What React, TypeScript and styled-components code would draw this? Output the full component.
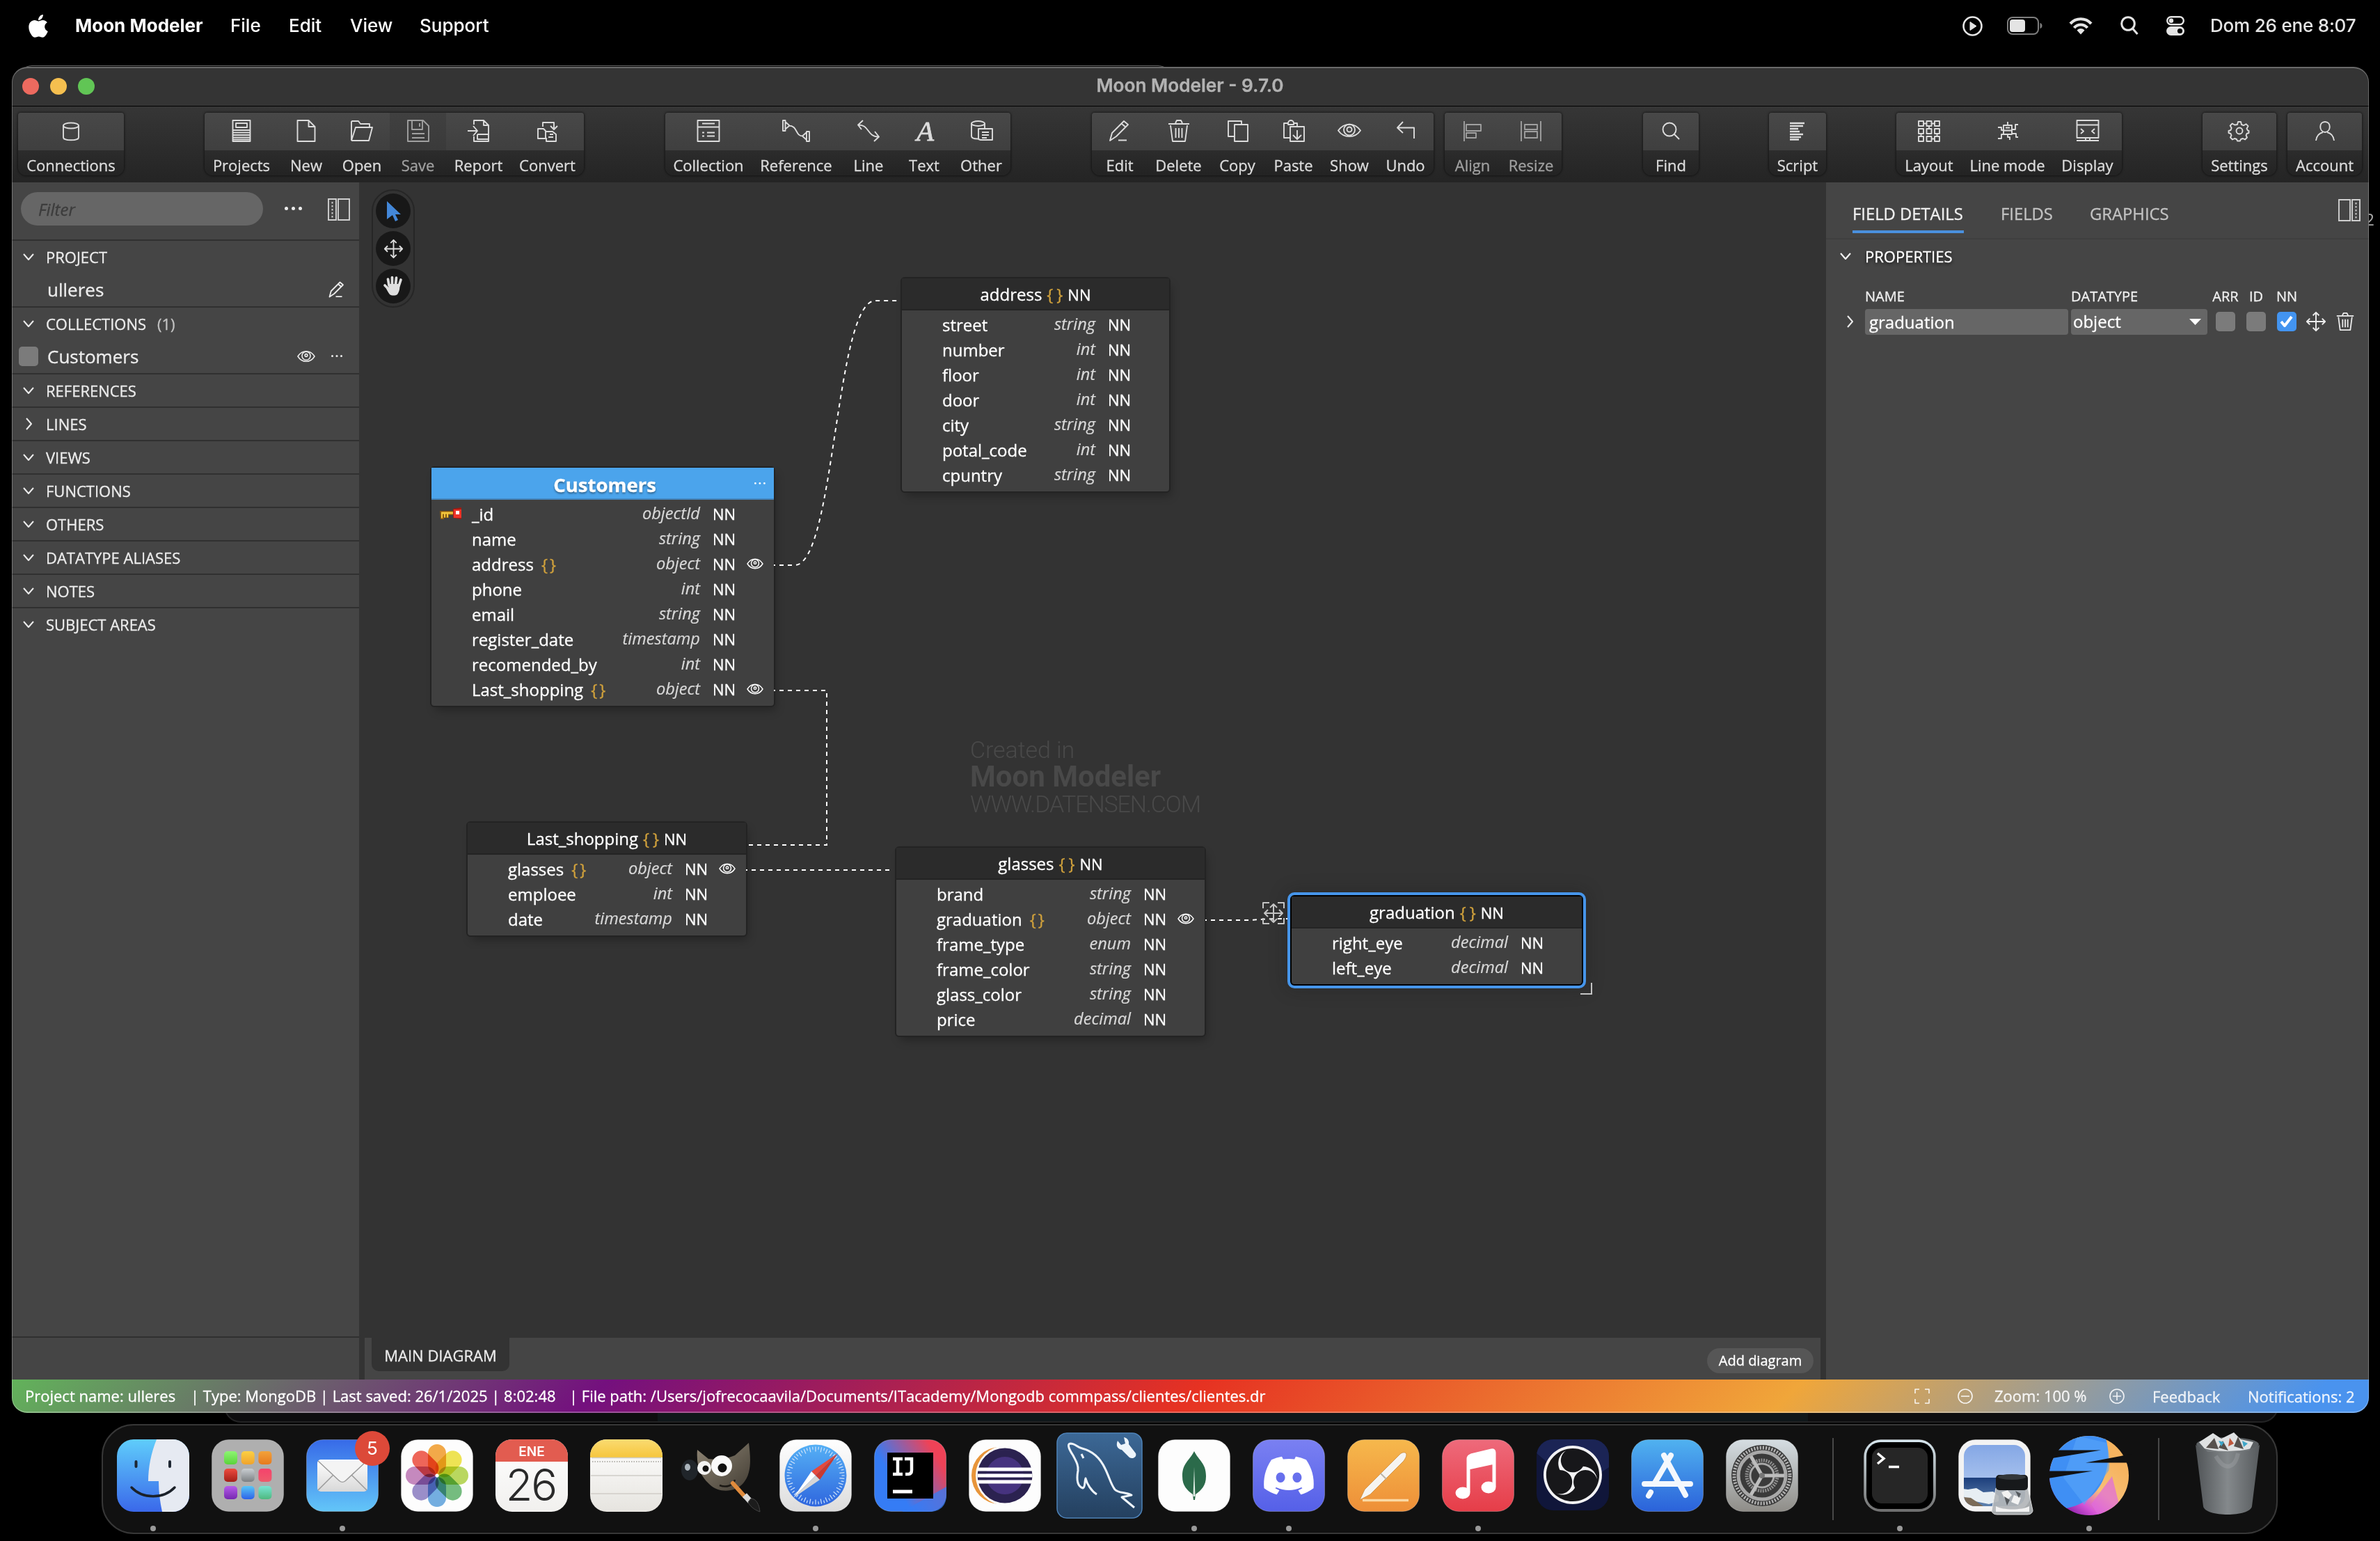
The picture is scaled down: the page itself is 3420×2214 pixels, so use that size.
import React from "react";
import styled, { createGlobalStyle, css } from "styled-components";
import { FaApple, FaDiscord } from "react-icons/fa";
import { SiObsstudio } from "react-icons/si";

const ui = `"Open Sans", "Noto Sans", sans-serif`;
const sys = `Inter, "Liberation Sans", sans-serif`;

const Global = createGlobalStyle`
  * { box-sizing: border-box; }
  body { margin: 0; background: #000; font-family: ${ui}; color: #ececec; }
  svg { display: block; flex: none; overflow: visible; }
`;

/* ---------- desktop ---------- */
const Desktop = styled.div`
  position: relative;
  width: 3420px;
  height: 2214px;
  background: #000;
  overflow: hidden;
`;

const MenuBar = styled.header`
  height: 74px;
  display: flex;
  align-items: center;
  padding: 0 35px 0 41px;
  font: 500 26px/74px ${sys};
  color: #fff;
`;
const AppleMark = styled(FaApple)`
  width: 28px;
  height: 34px;
  margin-right: 39px;
`;
const MenuItem = styled.span<{ $w: number; $bold?: boolean }>`
  width: ${(p) => p.$w}px;
  font-weight: ${(p) => (p.$bold ? 700 : 500)};
  white-space: nowrap;
`;
const MenuRight = styled.div`
  margin-left: auto;
  display: flex;
  align-items: center;
  color: #e4e4e4;
`;
const Clock = styled.span`
  margin-left: 37px;
  width: 209px;
  letter-spacing: -0.2px;
  white-space: nowrap;
`;
const Gap = styled.i<{ $w: number }>`
  width: ${(p) => p.$w}px;
`;

/* ---------- windows ---------- */
const BackTop = styled.div`
  position: absolute;
  left: 24px;
  top: 94px;
  width: 1662px;
  height: 40px;
  border-top: 1px solid #6a6a6a;
  border-radius: 22px 22px 0 0;
`;
const BackBottom = styled.div`
  position: absolute;
  left: 322px;
  top: 1990px;
  width: 2952px;
  height: 54px;
  background: linear-gradient(90deg, #0d0d0f 0 621px, #10171a 621px 2274px, #0e0e10 2274px);
  border: 2px solid #232324;
  border-radius: 0 0 24px 24px;
`;
const BackDigit = styled.div`
  position: absolute;
  left: 3404px;
  top: 301px;
  width: 8px;
  height: 28px;
  overflow: hidden;
  font: 24px/28px ${ui};
  color: #a8a8a8;
  direction: rtl;
`;
const Win = styled.main`
  position: absolute;
  left: 17px;
  top: 96px;
  width: 3387px;
  height: 1934px;
  display: flex;
  flex-direction: column;
  border-radius: 22px;
  overflow: hidden;
  background: #333;
  -webkit-text-stroke: 0.3px;
  &::after {
    content: "";
    position: absolute;
    inset: 0;
    border-radius: 22px;
    border: 2px solid rgba(255, 255, 255, 0.27);
    border-left-width: 1px;
    border-right-width: 1px;
    pointer-events: none;
  }
`;
const TitleBar = styled.div`
  height: 57px;
  flex: none;
  display: flex;
  align-items: center;
  padding-left: 15px;
  border-bottom: 1px solid #000;
  background: #343434;
`;
const Light = styled.i<{ $c: string }>`
  width: 24px;
  height: 24px;
  border-radius: 50%;
  margin-right: 16px;
  background: ${(p) => p.$c};
`;
const Title = styled.h1`
  margin: 0 136px 2px 0;
  flex: 1;
  text-align: center;
  font: 600 26.2px/54px ${sys};
  color: #b2b2b2;
`;

/* ---------- toolbar ---------- */
const Toolbar = styled.nav`
  height: 109px;
  flex: none;
  display: flex;
  padding: 9px 0 0 9px;
  background: linear-gradient(#363636, #242424);
  color: #dcdcdc;
`;
const Group = styled.div<{ $w: number; $ml?: number }>`
  width: ${(p) => p.$w}px;
  margin-left: ${(p) => p.$ml || 0}px;
  height: 90px;
  flex: none;
  display: flex;
  border-radius: 4px 4px 12px 12px;
  background: linear-gradient(#484848, #3f3f3f 54px, #2c2c2c 54px, #232323);
  box-shadow: 0 0 3px 1px rgba(0, 0, 0, 0.5);
`;
const Tool = styled.button<{ $w: number; $off?: boolean; $shade?: boolean }>`
  width: ${(p) => p.$w}px;
  flex: none;
  border: 0;
  padding: 10px 0 0;
  height: 90px;
  display: flex;
  flex-direction: column;
  align-items: center;
  gap: 12px;
  color: ${(p) => (p.$off ? "#a0a0a0" : "inherit")};
  font: 22px/42px ${ui};
  background: ${(p) => (p.$shade ? "linear-gradient(#404040, #3a3a3a 54px, transparent 54px)" : "none")};
  white-space: nowrap;
`;

/* ---------- body ---------- */
const Body = styled.div`
  height: 1720px;
  display: flex;
`;
const Sidebar = styled.aside`
  width: 499px;
  flex: none;
  display: flex;
  flex-direction: column;
  background: #454545;
`;
const FilterRow = styled.div`
  height: 84px;
  display: flex;
  align-items: flex-start;
  padding: 14px 12px 0 13px;
  border-bottom: 2px solid #303030;
`;
const Filter = styled.div`
  width: 348px;
  height: 48px;
  border-radius: 24px;
  background: #666;
  padding-left: 25px;
  font: italic 24px/50px ${ui};
  color: #3c3c3c;
`;
const Section = styled.section`
  border-bottom: 2px solid #303030;
  &:last-of-type { border: 0; }
`;
const SectionHead = styled.div`
  height: 46px;
  padding: 0 0 1px 16px;
  display: flex;
  align-items: center;
  font-size: 22px;
  svg { margin-right: 17px; }
`;
const Count = styled.span`
  margin-left: 16px;
  color: #c2c2c2;
`;
const SectionItem = styled.div`
  height: 48px;
  display: flex;
  align-items: center;
  padding: 0 20px 1px 10px;
  font-size: 26px;
`;
const ItemName = styled.span<{ $pl: number }>`
  flex: 1;
  padding-left: ${(p) => p.$pl}px;
`;
const Box = styled.i<{ $on?: boolean }>`
  width: 28px;
  height: 28px;
  border-radius: 5px;
  display: grid;
  place-items: center;
  background: ${(p) => (p.$on ? "#4394f0" : "#7b7b7b")};
`;
const SideFoot = styled.div`
  margin-top: auto;
  height: 62px;
  border-top: 2px solid #303030;
`;

const Center = styled.div`
  width: 2108px;
  flex: none;
  display: flex;
  flex-direction: column;
  background: #333;
`;
const Canvas = styled.div`
  position: relative;
  height: 1660px;
  background: #333;
`;
const Links = styled.svg`
  position: absolute;
  left: 0;
  top: 0;
`;
const Palette = styled.div`
  position: absolute;
  left: 18px;
  top: 10px;
  width: 62px;
  height: 170px;
  border-radius: 31px;
  border: 2px solid #262626;
  display: flex;
  flex-direction: column;
  align-items: center;
  gap: 4px;
  padding-top: 4px;
  color: #dedede;
`;
const Round = styled.div`
  width: 50px;
  height: 50px;
  border-radius: 50%;
  background: #181818;
  display: grid;
  place-items: center;
`;
const Watermark = styled.div`
  position: absolute;
  left: 878px;
  top: 795px;
  color: #494949;
  white-space: nowrap;
  -webkit-text-stroke: 0;
`;
const WmLine = styled.div<{ $fs: number; $ls: number; $lh: number; $b?: boolean }>`
  font: ${(p) => (p.$b ? 700 : 300)} ${(p) => p.$fs}px / ${(p) => p.$lh}px Roboto, ${ui};
  letter-spacing: ${(p) => p.$ls}px;
`;

const Node = styled.article<{ $x: number; $y: number; $w: number; $sel?: boolean }>`
  position: absolute;
  left: ${(p) => p.$x}px;
  top: ${(p) => p.$y}px;
  width: ${(p) => p.$w}px;
  border: 2px solid #232323;
  border-radius: 6px;
  padding-bottom: 6px;
  background: #404040;
  box-shadow: 4px 8px 14px -4px rgba(0, 0, 0, 0.3);
  ${(p) =>
    p.$sel &&
    css`
      border-color: #000;
      box-shadow: 0 0 0 4px #4695ea, 0 0 24px 6px rgba(20, 20, 20, 0.25);
    `}
`;
const NodeHead = styled.h2<{ $main?: boolean }>`
  margin: 0 0 2px;
  height: 46px;
  display: flex;
  align-items: center;
  justify-content: center;
  gap: 7px;
  font: 24px/46px ${ui};
  color: #fff;
  background: #2b2b2b;
  border-bottom: 2px solid #242424;
  padding-top: 1px;
  white-space: nowrap;
  ${(p) =>
    p.$main &&
    css`
      position: relative;
      background: #4ba4ec;
      border-color: #4587c0;
      font-weight: 700;
      font-size: 27.5px;
      -webkit-text-stroke: 0.3px;
      text-shadow: 0 2px 3px rgba(0, 0, 0, 0.45);
      padding: 6px 0 0 6px;
    `}
`;
const HeadMore = styled.span`
  position: absolute;
  right: 12px;
  top: 21px;
`;
const Brace = styled.span`
  color: #cfa03c;
  letter-spacing: 5px;
  margin-right: -5px;
`;
const BraceTight = styled.span`
  color: #cfa03c;
  margin-left: 11px;
  letter-spacing: 3px;
`;
const Small = styled.span`
  font-size: 22px;
`;
const Row = styled.div`
  height: 36px;
  display: flex;
  align-items: center;
  color: #fff;
  line-height: 36px;
  white-space: nowrap;
`;
const KeyCell = styled.span`
  width: 58px;
  padding-left: 12px;
`;
const Name = styled.span`
  flex: 1;
  font-size: 24px;
  padding-top: 1px;
`;
const Type = styled.span`
  font: italic 23.6px/35px ${ui};
  color: #d8d8d8;
  width: 130px;
  height: 36px;
  text-align: right;
  margin-left: -130px;
  -webkit-text-stroke: 0.2px;
`;
const NN = styled.span`
  font-size: 22px;
  width: 54px;
  padding-left: 18px;
`;
const EyeCell = styled.span`
  width: 52px;
  padding-left: 14px;
`;
const Floating = styled.div<{ $x: number; $y: number }>`
  position: absolute;
  left: ${(p) => p.$x}px;
  top: ${(p) => p.$y}px;
  color: #c4c4c4;
`;

const TabBar = styled.div`
  height: 60px;
  margin: 0 8px;
  padding: 0 10px;
  display: flex;
  justify-content: space-between;
  background: #454545;
`;
const DiagramTab = styled.div`
  width: 198px;
  height: 48px;
  border-radius: 0 0 10px 10px;
  background: #333;
  font: 22px/51px ${ui};
  text-align: center;
`;
const AddDiagram = styled.button`
  width: 153px;
  height: 36px;
  margin-top: 15px;
  border: 0;
  padding: 0;
  border-radius: 18px;
  background: #565656;
  color: #fff;
  font: 20px/36px ${ui};
`;

/* ---------- details panel ---------- */
const Details = styled.aside`
  flex: 1;
  background: #454545;
  display: flex;
  flex-direction: column;
`;
const Tabs = styled.div`
  height: 82px;
  border-bottom: 2px solid #3f3f3f;
  display: flex;
  padding: 24px 12px 0 38px;
`;
const Tab = styled.div<{ $on?: boolean; $w: number }>`
  width: ${(p) => p.$w}px;
  height: 49px;
  margin-right: 53px;
  font: 23.8px/43px ${ui};
  color: ${(p) => (p.$on ? "#f0f0f0" : "#c2c2c2")};
  border-bottom: 4px solid ${(p) => (p.$on ? "#4a90dd" : "transparent")};
  white-space: nowrap;
`;
const PanelIcon = styled.span`
  margin-left: auto;
`;
const PropHead = styled.div`
  height: 52px;
  display: flex;
  align-items: center;
  padding: 0 0 4px 20px;
  font-size: 22px;
  color: #fff;
  text-shadow: 0 2px 4px #111;
  svg { margin-right: 20px; }
`;
const Cols = styled.div`
  display: grid;
  grid-template-columns: 292px 4px 196px 12px 28px 16px 28px 16px 28px 14px 28px 15px 26px;
  margin-left: 56px;
  align-items: center;
`;
const ColHead = styled(Cols)`
  margin-top: 13px;
  height: 32px;
  font-size: 20px;
  color: #f0f0f0;
`;
const Centered = styled.span`
  display: flex;
  justify-content: center;
`;
const FieldRow = styled.div`
  height: 38px;
  margin-top: 2px;
  display: flex;
  align-items: center;
  padding-left: 26px;
  svg { margin: 0; }
  ${Cols} { margin-left: 14px; }
`;
const Input = styled.div`
  height: 37px;
  border-radius: 4px;
  background: #666;
  padding-left: 6px;
  font: 24px/38px ${ui};
  color: #fff;
`;
const Select = styled(Input)`
  padding: 0 9px 0 3px;
  display: flex;
  justify-content: space-between;
  align-items: center;
`;

/* ---------- status bar ---------- */
const Status = styled.footer`
  height: 48px;
  flex: none;
  display: flex;
  align-items: center;
  padding: 0 21px 1px 19px;
  background: linear-gradient(135deg, #62b35a 0%, #74107e 25%, #e63222 50%, #f0a63a 75%, #4a93ee 97%);
  font: 22px/47px ${ui};
  color: #fff;
  white-space: pre;
`;
const StatusText = styled.span<{ $w: number; $ml?: number }>`
  width: ${(p) => p.$w}px;
  margin-left: ${(p) => p.$ml || 0}px;
`;
const StatusRight = styled.div`
  margin-left: auto;
  display: flex;
  align-items: center;
  color: rgba(255, 255, 255, 0.88);
`;
const StatusLink = styled.span<{ $w: number; $ml: number }>`
  margin-left: ${(p) => p.$ml}px;
  width: ${(p) => p.$w}px;
  padding-top: 2px;
`;

/* ---------- dock ---------- */
const Dock = styled.div`
  position: absolute;
  left: 146px;
  top: 2046px;
  width: 3127px;
  height: 158px;
  border-radius: 46px;
  background: #111;
  border: 2px solid #373737;
  display: flex;
  padding: 20px 0 0 20px;
`;
const DockItem = styled.div<{ $w?: number }>`
  position: relative;
  width: ${(p) => p.$w || 104}px;
  margin-right: 32px;
  height: 134px;
  flex: none;
  display: flex;
  flex-direction: column;
  justify-content: space-between;
  align-items: center;
  &:last-child { margin-right: 0; }
`;
const Dot = styled.i`
  width: 8px;
  height: 8px;
  border-radius: 50%;
  background: #999;
  margin-bottom: 2px;
`;
const Badge = styled.div`
  position: absolute;
  right: -16px;
  top: -12px;
  width: 50px;
  height: 50px;
  border-radius: 50%;
  background: #dc4939;
  color: #fff;
  font: 26px/50px ${sys};
  text-align: center;
`;
const Divider = styled.i<{ $ml: number; $mr: number }>`
  flex: none;
  width: 2px;
  height: 118px;
  margin: -2px ${(p) => p.$mr}px 0 ${(p) => p.$ml}px;
  background: #484848;
`;

/* ---------- icons ---------- */
type IconProps = { w?: number; h?: number; vb?: string; sw?: number; children: React.ReactNode };
const Icon = ({ w = 32, h = 32, vb = "0 0 32 32", sw = 1.9, children }: IconProps) => (
  <svg width={w} height={h} viewBox={vb} fill="none" stroke="currentColor" strokeWidth={sw} strokeLinejoin="round">
    {children}
  </svg>
);

const tool: Record<string, React.ReactNode> = {
  Connections: <><ellipse cx="16" cy="8.500" rx="11" ry="4" /><path d="M5 8.500v17c0 5 22 5 22 0v-17" /></>,
  Projects: <path d="M3.500 1h25v30h-25zM8 5h16v6H8zM3.500 15h25M3.500 18.500h25M3.500 22h25M3.500 25.500h25M3.500 28.500h25" />,
  New: <path d="M3.500 1h16l9 9v21h-25zM19.500 1v9h9" />,
  Open: <path d="M1 30V3l1-1h9l3 4h13v5M1 30h25l5-19H7L1 30" />,
  Save: <><path d="M1 1h22l8 8v22H1zM7 1v13h15V1M18 5v5" /><path d="M7 20h18M7 26h18" strokeWidth="2.200" /></>,
  Report: <path d="M9 7V1h14l7 7v23H9v-7M23 1v7h7M0 16h14M8 9l6 7-6 7M14 21h16M14 21v7h16" />,
  Convert: <path d="M9 10V4h16v8M20 9l5 5 5-5M2 13h8l3 3v11H2zM13 17h10l5 4v10H14v-5M17 25h7M19 21h5" />,
  Collection: <path d="M.500 1h31v30H.500zM.500 10.500h31M7 5.500h18M7 18.500h3M14 18.500h11M7 23.500h3M14 23.500h11" />,
  Reference: <path d="M-3 1H.500v15H-3zM.500 3l6 5.500-6 5M5.500 8.500c13 0 9 15 20 15M31 18l-6 5.500 6 5.500M31 17h4v14h-4z" />,
  Line: <path d="M8 1L1 7.500 6 14M1 7.500c16-1 13 17 29 17M25 17l6 7.500L24 31" />,
  Text: (
    <text x="5" y="30" fontFamily="Liberation Serif, serif" fontStyle="italic" fontSize="41" fill="currentColor" strokeWidth=".8">
      A
    </text>
  ),
  Other: <><ellipse cx="11.500" cy="5.500" rx="9.500" ry="3.500" /><path d="M2 5.500v18c0 3 4 4 9 4M21 5.500V13M12 13h20v16H15l-3-1zM17 18h10M17 22h10M17 26h7" /></>,
  Edit: <path d="M2 30l3-11L22 2l6 5-17 17zM19 6l6 5M14 29.500h12" />,
  Delete: <path d="M1 6h30M11 5l2-4h6l2 4M4 8l3 23h18l3-23M11.500 12v14M16 12v14M20.500 12v14" />,
  Copy: <path d="M12 24H3V2h19v5M12 7h19v24H12z" />,
  Paste: <path d="M11 26H2V5h6M16 5h5v5M8 5a4 4 0 0 1 8 0v2H8zM11 10h20v21H11zM21 15v12M15 22l6 6 6-6" />,
  Show: <><path d="M0 15.500C8 4 24 4 32 15.500 24 27 8 27 0 15.500z" /><circle cx="16" cy="14.500" r="8" /><circle cx="16" cy="14" r="3.500" /></>,
  Undo: <path d="M12 3L4 11.500 12 19M4 11.500h24V27" />,
  Align: <path d="M4 2v29M7 7h21v9H7zM7 19h14v7H7z" />,
  Resize: <path d="M2 2v29M30 2v29M7 7h18v7H7zM7 17h18v9H7z" />,
  Find: <><circle cx="14" cy="14" r="9.500" /><path d="M21 21l7 7" /></>,
  Script: <path d="M5 5h21M5 9h19M5 13h12M5 17h14M5 21h19M5 25h16M5 28.500h13" strokeWidth="2.600" />,
  Layout: (
    <path d="M1 2h7v7H1zM12.500 2h7v7h-7zM24 2h7v7h-7zM1 13h7v7H1zM12.500 13h7v7h-7zM24 13h7v7h-7zM1 24h7v7H1zM12.500 24h7v7h-7zM24 24h7v7h-7zM8 5.500h4.500M19.500 5.500H24M16 9v4M4.500 20v4M27.500 20v4M19.500 27.500H24" />
  ),
  "Line mode": <path d="M10 8h12v13H10zM10 15.500h12M13 11.500h6M16 8V3M2 11h5v4h3M31 7h-4v7h-5M2 27h5v-6h4M31 25h-3v-5h-6M16 21v4h3v4" />,
  Display: <path d="M.500 1h31v25H.500zM.500 7.500h31M6 13l4 3.500L6 20M26 13l-4 3.500 4 3.500M0 30h32M13 27v3M19 27v3" />,
  Settings: (
    <>
      <circle cx="16" cy="16" r="4.500" />
      <path d="M14 3h4l1 4 3 1.200 3.500-2 3 3-2 3.500L28 15.500l0 0 1.500.5v3l-3 1-1 2.500 1.500 3-3 3-3-1.500-3 1-1 2.500h-4l-1-2.500-3-1-3 1.500-3-3 1.500-3-1-2.500-3-1v-3l3-1 1.200-3-2-3.500 3-3 3.500 2L13 7z" />
    </>
  ),
  Account: <path d="M16 3c9 0 9 14 0 15-9-1-9-15 0-15zM3 30c1-8 6-11 10-12M29 30c-1-8-6-11-10-12" />,
};

type ToolDef = [string, number, string?];
const groups: { ml?: number; w: number; tools: ToolDef[] }[] = [
  { w: 152, tools: [["Connections", 152]] },
  { ml: 116, w: 545, tools: [["Projects", 106], ["New", 80], ["Open", 80], ["Save", 81, "shade"], ["Report", 93], ["Convert", 105]] },
  { ml: 117, w: 496, tools: [["Collection", 124], ["Reference", 128], ["Line", 80], ["Text", 80], ["Other", 84]] },
  { ml: 117, w: 491, tools: [["Edit", 80], ["Delete", 89], ["Copy", 80], ["Paste", 81], ["Show", 80], ["Undo", 81]] },
  { ml: 16, w: 168, tools: [["Align", 80, "off"], ["Resize", 88, "off"]] },
  { ml: 117, w: 80, tools: [["Find", 80]] },
  { ml: 101, w: 82, tools: [["Script", 82]] },
  { ml: 101, w: 324, tools: [["Layout", 94], ["Line mode", 131], ["Display", 99]] },
  { ml: 116, w: 106, tools: [["Settings", 106]] },
  { ml: 16, w: 107, tools: [["Account", 107]] },
];

const Eye = ({ s = 22 }: { s?: number }) => (
  <Icon w={s} h={s} sw={2.1}>
    <path d="M0 16C8 3 24 3 32 16 24 29 8 29 0 16z" />
    <circle cx="16" cy="15" r="8" />
    <circle cx="16" cy="14" r="2.500" />
  </Icon>
);
const Down = () => <Icon w={16} h={16} vb="0 0 16 16" sw={2}><path d="M1 4l7 8 7-8" /></Icon>;
const Right = () => <Icon w={16} h={16} vb="0 0 16 16" sw={2}><path d="M5 0l7 8-7 8" /></Icon>;
const Move = ({ s = 28 }: { s?: number }) => (
  <Icon w={s} h={s} sw={2.2}>
    <path d="M16 1v30M1 16h30M11 6l5-5 5 5M11 26l5 5 5-5M6 11l-5 5 5 5M26 11l5 5-5 5" />
  </Icon>
);
const Hand = () => (
  <svg width="28" height="30" viewBox="0 0 28 30" fill="none" stroke="currentColor" strokeWidth="3.700" strokeLinecap="round">
    <path d="M8 14L6.500 5M12.500 13V2.500M17.500 13l1-10M22 15l3-9M7 19l-5-5" />
    <path d="M6.500 12h16.500c1 6 0 10-3 15-3 2-8 2-11 0-3-4-5-8-6.500-12l5 2z" fill="currentColor" stroke="none" />
  </svg>
);
const Dots = ({ r = 2.6, gap = 10 }: { r?: number; gap?: number }) => (
  <svg width={gap * 2 + r * 2} height={r * 2} fill="currentColor">
    {[0, 1, 2].map((i) => <circle key={i} cx={r + i * gap} cy={r} r={r} />)}
  </svg>
);
const Panes = ({ flip }: { flip?: boolean }) => (
  <svg width="32" height="32" viewBox="0 0 32 32" fill="none" stroke="#cfcfcf" strokeWidth="1.900" transform={flip ? "scale(-1,1)" : undefined}>
    <path d="M1 1h11v30H1zM15 1h16v30H15z" />
    <path d="M6.500 5v23" strokeDasharray="2.500 2.500" />
  </svg>
);
const Key = () => (
  <svg width="32" height="18" viewBox="0 0 32 18">
    <path d="M0 5h21v6h-8v4H6v2H1z" fill="#8a5a10" />
    <path d="M2 6.500h18v3H12v5h-2v-5H8v5H6v-5H4v6H2z" fill="#f3c73c" />
    <path d="M19 2l12-2v17l-12-2z" fill="#a51a12" />
    <path d="M20 3h11v12H20z" fill="#ee3428" />
    <path d="M23 5h5v5h-5z" fill="#fff" />
  </svg>
);

/* ---------- diagram ---------- */
type Field = [string, string, boolean?, boolean?];
type Entity = { title: string; x: number; y: number; w: number; main?: boolean; sel?: boolean; fields: Field[] };
const entities: Entity[] = [
  {
    title: "Customers", x: 102, y: 408, w: 496, main: true,
    fields: [["_id", "objectId", false, true], ["name", "string"], ["address", "object", true], ["phone", "int"], ["email", "string"],
      ["register_date", "timestamp"], ["recomended_by", "int"], ["Last_shopping", "object", true]],
  },
  {
    title: "address", x: 778, y: 136, w: 388,
    fields: [["street", "string"], ["number", "int"], ["floor", "int"], ["door", "int"], ["city", "string"], ["potal_code", "int"], ["cpuntry", "string"]],
  },
  { title: "Last_shopping", x: 154, y: 918, w: 404, fields: [["glasses", "object", true], ["emploee", "int"], ["date", "timestamp"]] },
  {
    title: "glasses", x: 770, y: 954, w: 447,
    fields: [["brand", "string"], ["graduation", "object", true], ["frame_type", "enum"], ["frame_color", "string"], ["glass_color", "string"], ["price", "decimal"]],
  },
  { title: "graduation", x: 1338, y: 1024, w: 421, sel: true, fields: [["right_eye", "decimal"], ["left_eye", "decimal"]] },
];

const EntityNode = ({ e }: { e: Entity }) => (
  <Node $x={e.x} $y={e.y} $w={e.w} $sel={e.sel}>
    <NodeHead $main={e.main}>
      {e.title}
      {e.main ? <HeadMore><Dots r={1.4} gap={6.5} /></HeadMore> : <><Brace>{"{}"}</Brace><Small>NN</Small></>}
    </NodeHead>
    {e.fields.map(([name, type, obj, key]) => (
      <Row key={name}>
        <KeyCell>{key && <Key />}</KeyCell>
        <Name>{name}{obj && <BraceTight>{"{}"}</BraceTight>}</Name>
        <Type>{type}</Type>
        <NN>NN</NN>
        <EyeCell>{obj && <Eye />}</EyeCell>
      </Row>
    ))}
  </Node>
);

/* ---------- dock artwork ---------- */
const Art = ({ children, vb = "0 0 104 104", w = 104, h = 104 }: { children: React.ReactNode; vb?: string; w?: number; h?: number }) => (
  <svg width={w} height={h} viewBox={vb}>{children}</svg>
);
const Tile = ({ fill }: { fill: string }) => <rect x=".5" y=".5" width="103" height="103" rx="24" fill={fill} stroke="rgba(255,255,255,.25)" />;
const Grad = ({ id, a, b, diag }: { id: string; a: string; b: string; diag?: boolean }) => (
  <linearGradient id={id} x1="0" y1="0" x2={diag ? "1" : "0"} y2="1">
    <stop offset="0" stopColor={a} />
    <stop offset="1" stopColor={b} />
  </linearGradient>
);
const spin = (n: number, f: (a: number, i: number) => React.ReactNode) => Array.from({ length: n }, (_, i) => f((i * 360) / n, i));

const Finder = () => (
  <Art>
    <defs><Grad id="fi" a="#5fcdfb" b="#3a68ea" /><clipPath id="fc"><rect width="104" height="104" rx="24" /></clipPath></defs>
    <g clipPath="url(#fc)">
      <rect width="104" height="104" fill="url(#fi)" />
      <path d="M57 0C49 20 45 40 45 60h15c0 16 2 30 5 44h39V0z" fill="#e6eaf2" />
    </g>
    <path d="M27.500 32v7M76 32v7" stroke="#1e2733" strokeWidth="4" strokeLinecap="round" />
    <path d="M21 69c16 17 46 17 62 0" stroke="#1b2129" strokeWidth="3.500" fill="none" strokeLinecap="round" />
  </Art>
);
const padColors = [["#8df572", "#5ad33b"], ["#fbd044", "#f0a32d"], ["#f2a23a", "#e67a1f"], ["#ef4b3f", "#a31f18"], ["#c9ced2", "#7c8083"], ["#f5426c", "#ee5b6b"], ["#b55bea", "#7628b0"], ["#58c6f7", "#2d62e8"], ["#77e6d4", "#4fb87f"]];
const Launchpad = () => (
  <Art>
    <defs>{padColors.map(([a, b], i) => <Grad key={i} id={`lp${i}`} a={a} b={b} />)}</defs>
    <Tile fill="#afafaf" />
    {padColors.map((_, i) => (
      <rect key={i} x={18 + (i % 3) * 24.7} y={17 + Math.floor(i / 3) * 25} width="19" height="19" rx="5" fill={`url(#lp${i})`} />
    ))}
  </Art>
);
const Mail = () => (
  <Art>
    <defs><Grad id="ma" a="#376ae8" b="#63c6f8" /><Grad id="mb" a="#fff" b="#d8d8d8" /></defs>
    <Tile fill="url(#ma)" />
    <rect x="16" y="29" width="72" height="46" rx="5" fill="url(#mb)" />
    <path d="M17 73l25-25M87 73L62 48" stroke="#9a9a9a" strokeWidth="1.500" />
    <path d="M17 31l30 28c3 3 7 3 10 0l30-28" fill="#f4f4f4" stroke="#9a9a9a" strokeWidth="1.500" />
  </Art>
);
const petals = ["#f3a030", "#eee23c", "#b2d44a", "#63b56e", "#62a5de", "#8d7fc4", "#c07ab8", "#ee5243"];
const Photos = () => (
  <Art>
    <Tile fill="#fdfdfd" />
    {spin(8, (a, i) => (
      <rect key={i} x="39" y="7" width="26" height="43" rx="13" fill={petals[i]} opacity=".88" transform={`rotate(${a} 52 52)`} style={{ mixBlendMode: "multiply" }} />
    ))}
    <circle cx="52" cy="52" r="2.500" fill="#fff" />
  </Art>
);
const Calendar = () => (
  <Art>
    <defs><clipPath id="cal"><rect width="104" height="104" rx="24" /></clipPath><Grad id="cb" a="#fff" b="#f1f0ee" /></defs>
    <g clipPath="url(#cal)"><rect width="104" height="104" fill="url(#cb)" /><rect width="104" height="32" fill="#e25c50" /></g>
    <text x="52" y="24" textAnchor="middle" fontFamily={sys} fontWeight="600" fontSize="19" fill="#fff">ENE</text>
    <text x="51" y="87.500" textAnchor="middle" fontFamily={sys} fontWeight="300" fontSize="63" letterSpacing="-2" fill="#2a2a2a">26</text>
  </Art>
);
const Notes = () => (
  <Art>
    <defs><clipPath id="no"><rect width="104" height="104" rx="24" /></clipPath><Grad id="nb" a="#fff" b="#e6e4df" /><Grad id="ny" a="#fadb72" b="#f6c63d" /></defs>
    <g clipPath="url(#no)"><rect width="104" height="104" fill="url(#nb)" /><rect width="104" height="26" fill="url(#ny)" /></g>
    <path d="M2 26.500h100M1 52h102M1 78h102" stroke="#cfcdc8" strokeWidth="1.500" />
    <path d="M3 32h99" stroke="#b5b3ae" strokeWidth="2" strokeDasharray="1.500 2" />
  </Art>
);
const Gimp = () => (
  <Art>
    <defs><Grad id="gi" a="#8f8675" b="#433d34" diag /></defs>
    <path d="M18 15l16 13c12 2 26 0 38-5L92 5c3 24 4 44-8 58-12 14-36 14-48 2C24 54 16 40 18 15z" fill="url(#gi)" />
    <ellipse cx="7" cy="44" rx="12" ry="15" fill="#20252a" /><ellipse cx="4" cy="40" rx="4" ry="5" fill="#aab4bc" />
    <circle cx="28" cy="41" r="10" fill="#f3f3f3" /><circle cx="30" cy="42" r="4.500" fill="#111" />
    <circle cx="53" cy="38" r="15" fill="#fafafa" /><circle cx="54" cy="41" r="6.500" fill="#111" />
    <path d="M50 66c10 4 20 0 22-8" stroke="#1b1814" strokeWidth="2.500" fill="none" />
    <path d="M69 63l17 19" stroke="#e08b3c" strokeWidth="6" strokeLinecap="round" />
    <path d="M86 80l8 9" stroke="#dadada" strokeWidth="8" />
    <path d="M95 85c8 0 12 9 13 19-9-3-15-9-17-14z" fill="#1c1c1c" stroke="#444" />
  </Art>
);
const Safari = () => (
  <Art>
    <defs><Grad id="sb" a="#55b0f5" b="#2f66de" /><Grad id="sw" a="#fff" b="#dcdcdc" /></defs>
    <Tile fill="url(#sw)" />
    <circle cx="52" cy="52" r="44.500" fill="url(#sb)" />
    {spin(60, (a, i) => <path key={i} d={i % 2 ? "M52 10.500v4" : "M52 10.500v7"} stroke="#cfe3fa" strokeWidth="1.200" transform={`rotate(${a} 52 52)`} />)}
    <path d="M84 20L46 46l6 6z" fill="#e4493c" /><path d="M84 20L58 58l-6-6z" fill="#c93a30" />
    <path d="M20 84l26-38 6 6z" fill="#fff" /><path d="M20 84l38-26-6-6z" fill="#d6d6d6" />
  </Art>
);
const IntelliJ = () => (
  <Art>
    <defs><linearGradient id="ij" x1="0" y1=".7" x2="1" y2=".1"><stop offset=".25" stopColor="#357cf5" /><stop offset=".85" stopColor="#ef4257" /></linearGradient></defs>
    <Tile fill="url(#ij)" />
    <path d="M40 104L104 68v12c0 15-9 24-24 24z" fill="#357cf5" opacity=".75" />
    <rect x="19" y="19" width="66" height="66" />
    <path d="M27 28h14M34 28v22M27 50h14M44 28h10v16c0 4-2 6-5 6h-4" stroke="#fff" strokeWidth="4.500" fill="none" />
    <path d="M27 75h28" stroke="#fff" strokeWidth="5" />
  </Art>
);
const Eclipse = () => (
  <Art>
    <Tile fill="#fdfdfd" />
    <circle cx="45" cy="52" r="41" fill="#e8953a" />
    <circle cx="53" cy="52" r="43" fill="#fdfdfd" />
    <circle cx="52" cy="52" r="39.500" fill="#2b2250" /><circle cx="52" cy="52" r="27" fill="#46337f" />
    <path d="M13 43h78M12.500 52h79M13 61h78" stroke="#fff" strokeWidth="5" />
    <path d="M14 47.500h76M14 56.500h76" stroke="#2b2250" strokeWidth="3" />
  </Art>
);
const MySql = () => (
  <Art w={124} h={124} vb="0 0 124 124">
    <defs><Grad id="my" a="#3c6896" b="#24405f" /></defs>
    <rect x="1" y="1" width="122" height="122" rx="14" fill="url(#my)" stroke="#4d82b8" strokeWidth="1.500" />
    <path d="M58 89C50 84 44 74 42 66c-2 5 0 13-4 14-9-3-9-14-7-25 1-8-3-14-7-22-4-6-10-16-4-17 8 0 10 6 17 7 16 4 26 14 33 29 6 12 8 22 14 30 6 6 14 3 24 8l-14 3 18 15" fill="none" stroke="#eef5fb" strokeWidth="3" strokeLinejoin="round" />
    <path d="M36 31l3 6" stroke="#eef5fb" strokeWidth="3" />
    <path d="M88 12c-3 7 0 12 6 13l11 11c5 3 11-1 9-6l-10-13c1-5-2-9-7-10l2 9-6 2z" fill="#eef5fb" />
  </Art>
);
const Mongo = () => (
  <Art>
    <Tile fill="#fdfdfd" />
    <path d="M52 17c7 14 17 17 17 36 0 14-7 20-15 26l-1 8h-2l-1-8c-8-6-15-12-15-26 0-19 10-22 17-36z" fill="#2b6a4a" />
    <path d="M52 40l1.500 42h-3z" fill="#e2efe7" />
  </Art>
);
const Discord = () => (
  <Art>
    <defs><Grad id="di" a="#7a80f2" b="#5560e8" /></defs>
    <Tile fill="url(#di)" />
    <FaDiscord x="13" y="13" size={78} color="#fff" />
  </Art>
);
const Pages = () => (
  <Art>
    <defs><Grad id="pa" a="#f6b84c" b="#ee8f38" /></defs>
    <Tile fill="url(#pa)" />
    <path d="M22 87.500h66" stroke="#fbd9a4" strokeWidth="3.500" />
    <path d="M18 87l7-15L76 21c5-4 9-2 9 1 0 3-2 6-4 9L33 79z" fill="#f6f4f0" stroke="#c98a3c" strokeWidth=".8" />
    <path d="M48 49l8 8" stroke="#b9b4aa" strokeWidth="2" />
  </Art>
);
const Music = () => (
  <Art>
    <defs><Grad id="mu" a="#ee6a7b" b="#e63d48" /></defs>
    <Tile fill="url(#mu)" />
    <path d="M38 76V28c0-3 1-4 4-5l29-7c3-.500 4 0 4 3v49M75 33l-37 8" stroke="#fff" strokeWidth="5" fill="none" />
    <path d="M38 25l37-9v16l-37 9z" fill="#fff" />
    <ellipse cx="30" cy="77" rx="10.500" ry="8.500" fill="#fff" /><ellipse cx="67" cy="69" rx="10.500" ry="8.500" fill="#fff" />
  </Art>
);
const Obs = () => (
  <Art>
    <defs><clipPath id="ob"><rect width="104" height="102" rx="24" /></clipPath></defs>
    <g clipPath="url(#ob)"><rect width="104" height="104" fill="#10163a" /><path d="M0 0h104v40L60 70 0 20z" fill="#1b2455" /></g>
    <circle cx="52" cy="51" r="40" fill="#17171a" />
    <SiObsstudio x="10" y="9" size={84} color="#f2f2f4" />
  </Art>
);
const AppStore = () => (
  <Art>
    <defs><Grad id="as" a="#50b2f0" b="#2b62da" /></defs>
    <Tile fill="url(#as)" />
    <path d="M57 23L33 64M47 23l31 57M19 64h66M28 76l-3 5" stroke="#f4f8fd" strokeWidth="8" strokeLinecap="round" />
  </Art>
);
const Gears = () => (
  <Art>
    <defs><Grad id="se" a="#d5dde2" b="#8f8d88" /></defs>
    <Tile fill="url(#se)" />
    <circle cx="52" cy="52" r="44" fill="#3a3a3a" />
    <circle cx="52" cy="52" r="40" fill="none" stroke="#b3b3b3" strokeWidth="5" strokeDasharray="2.200 2" />
    <circle cx="52" cy="52" r="34" fill="none" stroke="#a8a8a8" strokeWidth="5" />
    <circle cx="52" cy="52" r="22" fill="none" stroke="#8f8f8f" strokeWidth="5" strokeDasharray="2 1.500" />
    <circle cx="52" cy="52" r="17" fill="none" stroke="#a8a8a8" strokeWidth="3" />
    {spin(3, (a, i) => <path key={i} d="M52 52h32" stroke="#bdbdbd" strokeWidth="5" transform={`rotate(${a} 52 52)`} />)}
    <circle cx="52" cy="52" r="4" fill="#777" />
  </Art>
);
const Terminal = () => (
  <Art>
    <defs><Grad id="te" a="#d6e6ee" b="#6d6d6d" /></defs>
    <Tile fill="url(#te)" />
    <rect x="4" y="4" width="96" height="96" rx="20" /><rect x="12" y="12" width="80" height="80" rx="14" fill="#262626" />
    <path d="M20 20l9 7.500-9 7.500M36 39.500h15" stroke="#fff" strokeWidth="3.500" fill="none" />
  </Art>
);
const Preview = () => (
  <Art>
    <defs><Grad id="pr" a="#7fa3e4" b="#c5d8f4" /><clipPath id="pc"><rect x="8" y="8" width="88" height="88" rx="16" /></clipPath><Grad id="ps" a="#1d3f7c" b="#6c8fb8" /></defs>
    <Tile fill="#f3f3f3" />
    <g clipPath="url(#pc)">
      <rect width="104" height="104" fill="url(#pr)" /><rect y="55" width="104" height="49" fill="url(#ps)" />
      <path d="M0 70l14 2 12-2 10 6 14-1 8 6v8l-14 4-40-8z" fill="#e7eef3" /><path d="M0 82l18 2 12 8 18 12H0z" fill="#7b6b58" />
    </g>
    <path d="M54 70h46l7 32c0 4-4 6-8 6H56c-4 0-8-2-8-6z" fill="#b3b7ba" opacity=".92" stroke="#efefef" />
    <path d="M62 76l9-3 6 7-8 9zM80 80l10 4-4 10-10-4zM54 96c10 6 38 6 48 0v8H54z" fill="#f2f2f2" /><path d="M66 82l8 5-4 8zM82 74l8 4-3 6z" fill="#54585c" />
    <rect x="54" y="51" width="46" height="22" rx="5" fill="#17191b" /><ellipse cx="77" cy="54" rx="20" ry="4" fill="#33373a" />
  </Art>
);
const MoonApp = () => (
  <Art w={114} h={114} vb="0 0 114 114">
    <defs>
      <clipPath id="mc"><circle cx="57" cy="57" r="57" /></clipPath>
      <linearGradient id="mr" x1="1" y1="0" x2=".2" y2="1"><stop offset=".3" stopColor="#f6b460" /><stop offset=".6" stopColor="#f7c077" /><stop offset=".8" stopColor="#d655d8" /><stop offset="1" stopColor="#7a149c" /></linearGradient>
    </defs>
    <g clipPath="url(#mc)">
      <rect width="114" height="114" fill="url(#mr)" />
      <path d="M0 0h80c14 45-6 95-56 104H0z" fill="#3f8ff4" />
      <path d="M40 0l42 10c4 14 5 26 3 40L50 99 20 60z" fill="#59a5f8" opacity=".6" />
      <path d="M60 98l30-40 10 40-30 16z" fill="#e06ae0" opacity=".7" />
    </g>
    <path d="M6 20.500h68L4 32zM118 26L52 38.500h66zM-2 50.500h64L-2 61z" fill="#111" />
  </Art>
);
const Trash = () => (
  <Art w={94} h={120} vb="0 0 94 120">
    <defs><linearGradient id="tr"><stop offset="0" stopColor="#55595c" /><stop offset=".5" stopColor="#8d9295" /><stop offset="1" stopColor="#5c6063" /></linearGradient></defs>
    <ellipse cx="47" cy="17" rx="45" ry="10" fill="#5b5f62" />
    <path d="M6 14l20-13 12 8L56 0l10 10 18 4-6 12-60 2z" fill="#dfe1e2" /><path d="M16 22l12-14 6 16zM56 20L62 6l8 18zM40 12l8 14-14-4z" fill="#57514d" />
    <path d="M34 12l8 2-4 6zM68 12l8 4-6 5z" fill="#3fa6c8" /><path d="M50 8l6 8-8 4z" fill="#c0573b" />
    <path d="M1 18c20 12 72 12 92 0l-11 88c-2 16-68 16-70 0z" fill="url(#tr)" opacity=".93" />
    <path d="M30 34c14 24 28 16 32-4" stroke="#a5aaad" strokeWidth="6" fill="none" opacity=".35" />
  </Art>
);

const dock: [React.FC, boolean][] = [
  [Finder, true], [Launchpad, false], [Mail, true], [Photos, false], [Calendar, false], [Notes, false], [Gimp, false], [Safari, true],
  [IntelliJ, false], [Eclipse, false], [MySql, false], [Mongo, true], [Discord, true], [Pages, false], [Music, true], [Obs, false],
  [AppStore, false], [Gears, false],
];

const Lift = styled.div<{ $y: number; $x?: number }>`
  margin: ${(p) => p.$y}px ${(p) => p.$x || 0}px 0;
`;

export default function App() {
  return (
    <Desktop>
      <Global />
      <MenuBar>
        <AppleMark viewBox="0 20 384 460" />
        <MenuItem $w={223} $bold>Moon Modeler</MenuItem>
        <MenuItem $w={84}>File</MenuItem>
        <MenuItem $w={88}>Edit</MenuItem>
        <MenuItem $w={100}>View</MenuItem>
        <MenuItem $w={110}>Support</MenuItem>
        <MenuRight>
          <Icon w={29} h={29} vb="0 0 29 29" sw={2.6}><circle cx="14.500" cy="14.500" r="13" /><path d="M11 8.500l9 6-9 6z" fill="currentColor" strokeWidth="1" /></Icon>
          <Gap $w={35} />
          <svg width="52" height="26" viewBox="0 0 52 26" fill="currentColor">
            <rect x="1" y="1" width="44" height="24" rx="7" fill="none" stroke="#7d7d7d" strokeWidth="2" />
            <rect x="4" y="4" width="22" height="18" rx="4" /><path d="M47.500 9c4 1 4 7 0 8z" fill="#7d7d7d" />
          </svg>
          <Gap $w={37} />
          <svg width="34" height="25" viewBox="0 0 34 25" fill="none" stroke="currentColor" strokeWidth="4.200">
            <path d="M2 9c8-9 22-9 30 0M7.500 15c5-6 14-6 19 0" /><path d="M17 24.500l-5.500-6c3-3.300 8-3.300 11 0z" fill="currentColor" stroke="none" />
          </svg>
          <Gap $w={40} />
          <Icon w={26} h={28} vb="0 0 26 28" sw={3}><circle cx="11" cy="11" r="9.300" /><path d="M17.500 18l7 8" /></Icon>
          <Gap $w={40} />
          <svg width="26" height="28" viewBox="0 0 26 28" fill="currentColor">
            <rect x="1.200" y="1.200" width="23.600" height="11" rx="5.500" fill="none" stroke="currentColor" strokeWidth="2.400" /><circle cx="7" cy="6.700" r="3.200" />
            <rect y="15" width="26" height="13" rx="6.500" /><circle cx="19.500" cy="21.500" r="3.600" fill="#000" />
          </svg>
          <Clock>Dom 26 ene 8:07</Clock>
        </MenuRight>
      </MenuBar>

      <BackTop />
      <BackBottom />
      <BackDigit>2</BackDigit>

      <Win>
        <TitleBar>
          <Light $c="#ed6a5f" /><Light $c="#f5bf4f" /><Light $c="#61c555" />
          <Title>Moon Modeler - 9.7.0</Title>
        </TitleBar>
        <Toolbar>
          {groups.map((g, i) => (
            <Group key={i} $w={g.w} $ml={g.ml}>
              {g.tools.map(([label, w, mode]) => (
                <Tool key={label} $w={w} $off={!!mode} $shade={mode === "shade"}>
                  <Icon>{tool[label]}</Icon>
                  {label}
                </Tool>
              ))}
            </Group>
          ))}
        </Toolbar>

        <Body>
          <Sidebar>
            <FilterRow>
              <Filter>Filter</Filter>
              <Lift $y={21} $x={31}><Dots r={2.5} gap={10} /></Lift>
              <Gap $w={6} />
              <Lift $y={9}><Panes /></Lift>
            </FilterRow>
            <Section>
              <SectionHead><Down />PROJECT</SectionHead>
              <SectionItem><ItemName $pl={41}>ulleres</ItemName><Icon w={24} h={24} sw={2.4}>{tool.Edit}</Icon></SectionItem>
            </Section>
            <Section>
              <SectionHead><Down />COLLECTIONS<Count>(1)</Count></SectionHead>
              <SectionItem>
                <Box /><ItemName $pl={13}>Customers</ItemName>
                <Eye s={24} /><Gap $w={24} /><Dots r={1.5} gap={6.5} /><Gap $w={4} />
              </SectionItem>
            </Section>
            {["REFERENCES", "LINES", "VIEWS", "FUNCTIONS", "OTHERS", "DATATYPE ALIASES", "NOTES", "SUBJECT AREAS"].map((s) => (
              <Section key={s}><SectionHead>{s === "LINES" ? <Right /> : <Down />}{s}</SectionHead></Section>
            ))}
            <SideFoot />
          </Sidebar>

          <Center>
            <Canvas>
              <Palette>
                <Round><svg width="24" height="30" viewBox="0 0 24 30"><path d="M3 1l20 19h-8l4 8-4 2-4-9-8 6z" fill="#4387d8" /></svg></Round>
                <Round><Move s={27} /></Round>
                <Round><Hand /></Round>
              </Palette>
              <Watermark>
                <WmLine $fs={34} $ls={-0.1} $lh={40}>Created in</WmLine>
                <WmLine $fs={42} $ls={0} $lh={37} $b>Moon Modeler</WmLine>
                <WmLine $fs={34} $ls={-1.1} $lh={43}>WWW.DATENSEN.COM</WmLine>
              </Watermark>
              {entities.map((e) => <EntityNode key={e.title} e={e} />)}
              <Links width="2108" height="1660" viewBox="516 262 2108 1660" fill="none" stroke="#fff" strokeWidth="2" strokeDasharray="6 6" strokeDashoffset="4">
                <path d="M1112 812H1142C1200 812 1200 432 1258 432H1292" />
                <path d="M1112 992H1188V1214H1075" />
                <path d="M1072 1250H1278" />
                <path d="M1732 1322H1790C1806 1322 1808 1320 1850 1320" />
              </Links>
              <Floating $x={1298} $y={1034}>
                <Icon w={32} h={32} sw={2}><path d="M1 9V1h9M22 1h9v8M31 23v8h-9M10 31H1v-8M16 3v26M4 16h24M11 8l5-5 5 5M11 24l5 5 5-5M8 11l-5 5 5 5M24 11l5 5-5 5" /></Icon>
              </Floating>
              <Floating $x={1755} $y={1150}>
                <Icon w={17} h={17} vb="0 0 17 17" sw={2}><path d="M16 0v16H0" strokeLinejoin="miter" /></Icon>
              </Floating>
            </Canvas>
            <TabBar>
              <DiagramTab>MAIN DIAGRAM</DiagramTab>
              <AddDiagram>Add diagram</AddDiagram>
            </TabBar>
          </Center>

          <Details>
            <Tabs>
              <Tab $on $w={160}>FIELD DETAILS</Tab>
              <Tab $w={75}>FIELDS</Tab>
              <Tab $w={115}>GRAPHICS</Tab>
              <PanelIcon><Panes flip /></PanelIcon>
            </Tabs>
            <PropHead><Down />PROPERTIES</PropHead>
            <ColHead>
              <span>NAME</span><i /><span>DATATYPE</span><i /><Centered>ARR</Centered><i /><Centered>ID</Centered><i /><Centered>NN</Centered>
            </ColHead>
            <FieldRow>
              <Right />
              <Cols>
                <Input>graduation</Input><i />
                <Select>object<svg width="17" height="9"><path d="M0 0h17l-8.500 9z" fill="#fff" /></svg></Select><i />
                <Box /><i /><Box /><i />
                <Box $on><Icon w={22} h={20} vb="0 0 22 20" sw={4}><path d="M3 10l5 6L18 3" stroke="#fff" /></Icon></Box><i />
                <Move s={28} /><i />
                <Icon w={26} h={28} sw={2.2}>{tool.Delete}</Icon>
              </Cols>
            </FieldRow>
          </Details>
        </Body>

        <Status>
          <StatusText $w={238}>Project name: ulleres</StatusText>
          <StatusText $w={544}>| Type: MongoDB | Last saved: 26/1/2025 | 8:02:48</StatusText>
          <StatusText $w={998}>| File path: /Users/jofrecocaavila/Documents/ITacademy/Mongodb commpass/clientes/clientes.dr</StatusText>
          <StatusRight>
            <Icon w={22} h={22} vb="0 0 22 22" sw={1.6}><path d="M1 7V1h6M15 1h6v6M21 15v6h-6M7 21H1v-6" /></Icon>
            <Gap $w={40} />
            <Icon w={22} h={22} vb="0 0 22 22" sw={1.6}><circle cx="11" cy="11" r="10" /><path d="M5 11h12" /></Icon>
            <StatusText $w={133} $ml={31}>Zoom: 100 %</StatusText>
            <Gap $w={32} />
            <Icon w={22} h={22} vb="0 0 22 22" sw={1.6}><circle cx="11" cy="11" r="10" /><path d="M5 11h12M11 5v12" /></Icon>
            <StatusLink $w={97} $ml={40}>Feedback</StatusLink>
            <StatusLink $w={153} $ml={40}>Notifications: 2</StatusLink>
          </StatusRight>
        </Status>
      </Win>

      <Dock>
        {dock.map(([A, dot], i) => (
          <DockItem key={i}>
            {A === MySql ? <Lift $y={-10} $x={-10}><A /></Lift> : <A />}
            {i === 2 && <Badge>5</Badge>}
            {dot && <Dot />}
          </DockItem>
        ))}
        <Divider $ml={17} $mr={43} />
        <DockItem><Terminal /><Dot /></DockItem>
        <DockItem><Preview /></DockItem>
        <DockItem><Lift $y={-5} $x={-5}><MoonApp /></Lift><Dot /></DockItem>
        <Divider $ml={15} $mr={51} />
        <DockItem $w={94}><Lift $y={-10}><Trash /></Lift></DockItem>
      </Dock>
    </Desktop>
  );
}
